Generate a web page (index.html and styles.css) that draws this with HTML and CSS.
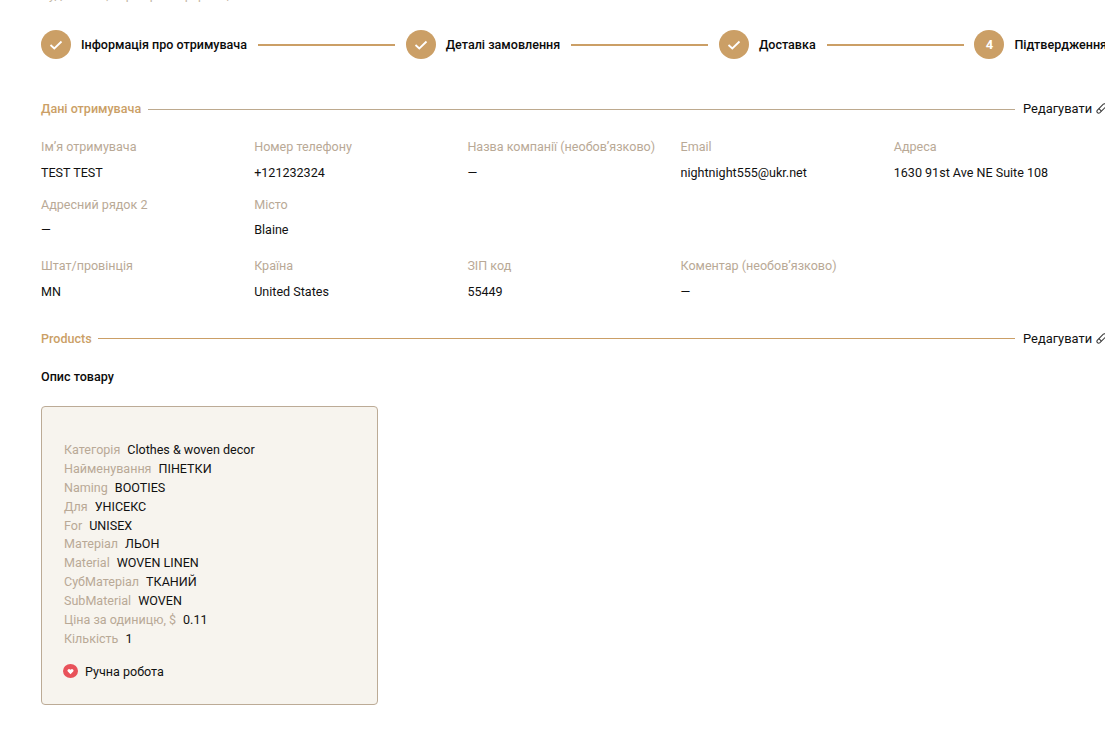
FILE: index.html
```html
<!DOCTYPE html>
<html lang="uk">
<head>
<meta charset="utf-8">
<title>Підтвердження</title>
<link rel="stylesheet" href="styles.css">
</head>
<body>
<div class="page">
  <p class="intro">Будь ласка, перевірте інформацію</p>
  <div class="steps">
    <div class="step"><span class="dot"><svg class="check" viewBox="0 0 14 10"><path d="M1.5 5l3.8 3.5L12.5 1.5"/></svg></span><span class="step-name">Інформація про отримувача</span></div>
    <span class="step-line"></span>
    <div class="step"><span class="dot"><svg class="check" viewBox="0 0 14 10"><path d="M1.5 5l3.8 3.5L12.5 1.5"/></svg></span><span class="step-name">Деталі замовлення</span></div>
    <span class="step-line"></span>
    <div class="step"><span class="dot"><svg class="check" viewBox="0 0 14 10"><path d="M1.5 5l3.8 3.5L12.5 1.5"/></svg></span><span class="step-name">Доставка</span></div>
    <span class="step-line"></span>
    <div class="step"><span class="dot">4</span><span class="step-name">Підтвердження</span></div>
  </div>

  <div class="section-head first-head">
    <span class="section-title">Дані отримувача</span>
    <span class="section-rule"></span>
    <span class="edit">Редагувати <svg class="pencil" viewBox="0 0 12 12"><path d="M1.3 8L8 1.3a2 2 0 0 1 2.8 2.8L4 10.8A2 2 0 0 1 1.3 8z"/><path d="M3.2 6.2l2.7 2.7"/></svg></span>
  </div>

  <div class="fields row-a">
    <div class="field"><div class="label">Ім’я отримувача</div><div class="value">TEST TEST</div></div>
    <div class="field"><div class="label">Номер телефону</div><div class="value">+121232324</div></div>
    <div class="field"><div class="label">Назва компанії (необов’язково)</div><div class="value">—</div></div>
    <div class="field"><div class="label">Email</div><div class="value">nightnight555@ukr.net</div></div>
    <div class="field"><div class="label">Адреса</div><div class="value">1630 91st Ave NE Suite 108</div></div>
  </div>
  <div class="fields row-b">
    <div class="field"><div class="label">Адресний рядок 2</div><div class="value">—</div></div>
    <div class="field"><div class="label">Місто</div><div class="value">Blaine</div></div>
  </div>
  <div class="fields row-c">
    <div class="field"><div class="label">Штат/провінція</div><div class="value">MN</div></div>
    <div class="field"><div class="label">Країна</div><div class="value">United States</div></div>
    <div class="field"><div class="label">ЗІП код</div><div class="value">55449</div></div>
    <div class="field"><div class="label">Коментар (необов’язково)</div><div class="value">—</div></div>
  </div>

  <div class="section-head products-head">
    <span class="section-title">Products</span>
    <span class="section-rule"></span>
    <span class="edit">Редагувати <svg class="pencil" viewBox="0 0 12 12"><path d="M1.3 8L8 1.3a2 2 0 0 1 2.8 2.8L4 10.8A2 2 0 0 1 1.3 8z"/><path d="M3.2 6.2l2.7 2.7"/></svg></span>
  </div>

  <div class="desc-title">Опис товару</div>

  <div class="card">
    <div class="spec"><span class="spec-key">Категорія</span><span>Clothes &amp; woven decor</span></div>
    <div class="spec"><span class="spec-key">Найменування</span><span>ПІНЕТКИ</span></div>
    <div class="spec"><span class="spec-key">Naming</span><span>BOOTIES</span></div>
    <div class="spec"><span class="spec-key">Для</span><span>УНІСЕКС</span></div>
    <div class="spec"><span class="spec-key">For</span><span>UNISEX</span></div>
    <div class="spec"><span class="spec-key">Матеріал</span><span>ЛЬОН</span></div>
    <div class="spec"><span class="spec-key">Material</span><span>WOVEN LINEN</span></div>
    <div class="spec"><span class="spec-key">СубМатеріал</span><span>ТКАНИЙ</span></div>
    <div class="spec"><span class="spec-key">SubMaterial</span><span>WOVEN</span></div>
    <div class="spec"><span class="spec-key">Ціна за одиницю, $</span><span>0.11</span></div>
    <div class="spec"><span class="spec-key">Кількість</span><span>1</span></div>
    <div class="handmade">
      <svg class="heart" viewBox="0 0 15 14"><ellipse cx="7.5" cy="7" rx="7.5" ry="7"/><path class="heart-in" d="M7.5 10.2L4.8 7.6a1.6 1.6 0 0 1 2.3-2.2l.4.4.4-.4a1.6 1.6 0 0 1 2.3 2.2z"/></svg>
      <span>Ручна робота</span>
    </div>
  </div>
</div>
</body>
</html>
```

FILE: styles.css
```css
html, body {
  margin: 0;
  padding: 0;
  background: #fff;
  overflow: hidden;
}
.page {
  box-sizing: border-box;
  width: 1105px;
  height: 731px;
  overflow: hidden;
  padding-left: 41px;
  font-family: Roboto, "Liberation Sans", sans-serif;
  font-size: 12.55px;
  line-height: 19px;
  color: #111;
}
.intro {
  margin: -15px 0 0;
  height: 18px;
  color: #c4b6a4;
}
.steps {
  display: flex;
  align-items: center;
  margin-top: 27px;
  height: 29px;
  width: 1200px;
}
.step {
  display: flex;
  align-items: center;
  flex: none;
}
.dot {
  display: flex;
  align-items: center;
  justify-content: center;
  width: 30px;
  height: 29px;
  border-radius: 50%;
  background: #cb9f66;
  color: #fff;
  font-weight: 700;
  font-size: 13px;
}
.check {
  width: 14px;
  height: 10px;
  fill: none;
  stroke: #fff;
  stroke-width: 1.8;
}
.step-name {
  margin-left: 10px;
  font-weight: 500;
  color: #0b0b0b;
  white-space: nowrap;
}
.step-line {
  flex: none;
  width: 137px;
  height: 2px;
  margin: 0 10.7px 0 11px;
  background: #cb9f66;
}
.section-head {
  display: flex;
  align-items: center;
  margin-top: 40px;
  height: 19px;
  width: 1064px;
  white-space: nowrap;
}
.section-title {
  color: #cb9f66;
  font-weight: 500;
  flex: none;
}
.section-rule {
  flex: 1;
  height: 1px;
  margin: 0 8px 0 6.6px;
  background: #cb9f66;
}
.first-head .section-rule {
  margin-top: 1px;
  background: #bda98e;
}
.edit {
  flex: none;
  display: flex;
  align-items: center;
  gap: 4px;
  width: 82px;
  font-size: 12.9px;
  color: #111;
}
.pencil {
  flex: none;
  width: 11px;
  height: 11px;
  fill: none;
  stroke: #333;
  stroke-width: 1.1;
}
.fields {
  display: grid;
  grid-template-columns: repeat(5, 213.2px);
}
.row-a { margin-top: 19px; }
.row-b { margin-top: 13px; }
.row-c { margin-top: 17px; }
.label {
  color: #b9a996;
  height: 19px;
  white-space: nowrap;
}
.value {
  margin-top: 7px;
  color: #111;
  white-space: nowrap;
}
.row-b .value { margin-top: 6px; }
.products-head { margin-top: 28px; }
.desc-title {
  margin-top: 19px;
  font-weight: 500;
  color: #0b0b0b;
}
.card {
  box-sizing: border-box;
  width: 337px;
  height: 299px;
  margin-top: 20px;
  padding: 33px 22px 0;
  background: #f7f4ee;
  border: 1px solid #bcab96;
  border-radius: 4px;
}
.spec {
  display: flex;
  gap: 7px;
  height: 18.9px;
  white-space: nowrap;
}
.spec-key { color: #b9a996; }
.handmade {
  display: flex;
  align-items: center;
  gap: 7px;
  margin-top: 14px;
  margin-left: -1px;
  height: 19px;
}
.heart {
  flex: none;
  width: 15px;
  height: 14px;
  fill: #e8525a;
}
.heart-in { fill: #fff; }
```
